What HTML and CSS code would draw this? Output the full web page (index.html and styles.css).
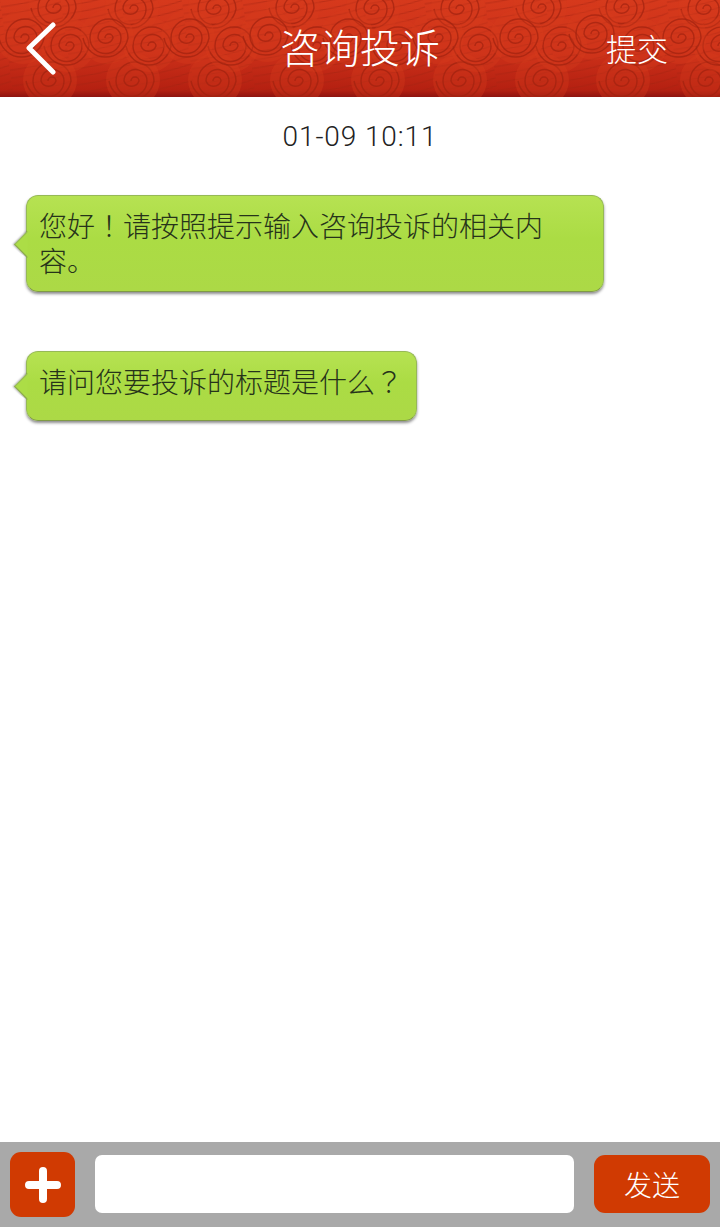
FILE: index.html
```html
<!DOCTYPE html>
<html lang="zh">
<head>
  <meta charset="UTF-8" />
  <meta name="viewport" content="width=device-width, initial-scale=1.0"/>
  <title>咨询投诉</title>
  <link rel="stylesheet" href="styles.css">
</head>
<body>
  <header class="topbar">
    <svg class="topbar-bg" width="720" height="97" viewBox="0 0 720 97">
      <defs>
        <linearGradient id="barFill" x1="0" y1="0" x2="0" y2="1">
          <stop offset="0" stop-color="#d6391c"/>
          <stop offset="0.55" stop-color="#cb3019"/>
          <stop offset="0.93" stop-color="#b42011"/>
          <stop offset="1" stop-color="#8e1410"/>
        </linearGradient>
        <pattern id="waves" width="60" height="8" patternUnits="userSpaceOnUse" patternTransform="rotate(-8)">
          <path d="M0 7 C20 7 40 6 60 2" fill="none" stroke="#a02210" stroke-opacity="0.5" stroke-width="1"/>
        </pattern>
        <g id="swirl">
          <circle r="27" fill="#d83c1d" fill-opacity="0.35"/>
          <path d="M-2 1a4 4 0 0 1 8 0a8 8 0 0 1-15 0a11.500 11.500 0 0 1 23 0a15.500 15.500 0 0 1-31 0a19 19 0 0 1 38 0a23 24 0 0 1-45 0" fill="none" stroke="#a02210" stroke-opacity="0.7" stroke-width="1.4"/>
        </g>
      </defs>
      <rect width="720" height="97" fill="url(#barFill)"/>
      <rect width="720" height="94" fill="url(#waves)"/>
      <g>
        <use href="#swirl" x="50" y="80"/><use href="#swirl" x="133" y="80"/><use href="#swirl" x="215" y="80"/><use href="#swirl" x="297" y="80"/>
        <use href="#swirl" x="378" y="80"/><use href="#swirl" x="460" y="80"/><use href="#swirl" x="542" y="80"/><use href="#swirl" x="623" y="80"/><use href="#swirl" x="707" y="80"/>
        <use href="#swirl" x="55" y="7"/><use href="#swirl" x="132" y="8"/><use href="#swirl" x="215" y="8"/><use href="#swirl" x="293" y="7"/>
        <use href="#swirl" x="373" y="8"/><use href="#swirl" x="458" y="8"/><use href="#swirl" x="540" y="7"/><use href="#swirl" x="623" y="7"/><use href="#swirl" x="705" y="8"/>
        <use href="#swirl" x="68" y="45"/><use href="#swirl" x="150" y="45"/><use href="#swirl" x="232" y="45"/><use href="#swirl" x="315" y="45"/>
        <use href="#swirl" x="396" y="45"/><use href="#swirl" x="477" y="45"/><use href="#swirl" x="560" y="45"/><use href="#swirl" x="640" y="45"/><use href="#swirl" x="720" y="45"/>
        <use href="#swirl" x="23" y="37"/><use href="#swirl" x="107" y="37"/><use href="#swirl" x="188" y="37"/><use href="#swirl" x="267" y="35"/>
        <use href="#swirl" x="347" y="37"/><use href="#swirl" x="437" y="37"/><use href="#swirl" x="517" y="37"/><use href="#swirl" x="593" y="33"/><use href="#swirl" x="680" y="37"/>
      </g>
    </svg>
    <a class="back">
      <svg width="32" height="54" viewBox="0 0 32 54"><path d="M27 3 L3 26 L27 50" fill="none" stroke="#fff" stroke-width="5" stroke-linecap="round" stroke-linejoin="round"/></svg>
    </a>
    <h1 class="title">咨询投诉</h1>
    <a class="submit">提交</a>
  </header>

  <main class="chat">
    <div class="time">01-09 10:11</div>
    <div class="bubble bubble-long">您好<span class="mark" lang="zh-TW">！</span>请按照提示输入咨询投诉的相关内容。</div>
    <div class="bubble">请问您要投诉的标题是什么<span class="mark" lang="zh-TW">？</span></div>
  </main>

  <footer class="inputbar">
    <button class="add">
      <svg width="38" height="38" viewBox="0 0 38 38"><path d="M5 19 H33 M19 5 V33" fill="none" stroke="#fff" stroke-width="8" stroke-linecap="round"/></svg>
    </button>
    <input class="msg" type="text" />
    <button class="send">发送</button>
  </footer>
</body>
</html>
```

FILE: styles.css
```css
* {
  box-sizing: border-box;
}
body {
  margin: 0;
  height: 1227px;
  background: #fff;
  font-family: "Noto Sans CJK SC", "Noto Sans", sans-serif;
  font-weight: 300;
  color: #333;
  display: flex;
  flex-direction: column;
  overflow: hidden;
}
.topbar {
  position: relative;
  height: 97px;
  display: grid;
  grid-template-columns: 1fr auto 1fr;
  align-items: center;
  color: #fff;
}
.topbar-bg {
  position: absolute;
  left: 0;
  top: 0;
}
.back, .title, .submit {
  position: relative;
}
.back {
  display: flex;
  padding-left: 26px;
}
.title {
  margin: 0;
  padding-bottom: 4px;
  font-size: 40px;
  font-weight: 300;
  line-height: 93px;
}
.submit {
  justify-self: end;
  padding-right: 52px;
  padding-bottom: 3px;
  font-size: 31px;
}
.chat {
  flex: 1;
  padding: 0 26px;
  display: flex;
  flex-direction: column;
  align-items: flex-start;
}
.time {
  align-self: center;
  margin-top: 21px;
  margin-bottom: 40px;
  height: 37px;
  line-height: 37px;
  font-family: Roboto, sans-serif;
  font-weight: 300;
  font-size: 28px;
  letter-spacing: 0.9px;
  color: #222;
}
.bubble {
  position: relative;
  min-height: 70px;
  padding: 12px 13px 13px 12px;
  margin-bottom: 59px;
  font-size: 28px;
  line-height: 35px;
  color: #26331a;
  background: linear-gradient(#b6e252, #abdc44 45%, #acd946);
  border: 1px solid #96b956;
  border-bottom-color: #7f9a45;
  border-radius: 12px;
  box-shadow: 0 2px 3px rgba(0, 0, 0, 0.45);
}
.bubble::before {
  content: "";
  position: absolute;
  left: -9px;
  top: calc(50% - 9px);
  width: 18px;
  height: 18px;
  background: #acdd46;
  border-left: 1px solid #96b956;
  border-bottom: 1px solid #8aa64e;
  transform: rotate(45deg);
  box-shadow: -1px 1px 2px rgba(0, 0, 0, 0.3);
  clip-path: polygon(0 0, 100% 100%, -30% 130%, -30% 0);
}
.mark {
  font-family: "Noto Sans CJK TC", sans-serif;
}
.bubble-long {
  width: 578px;
  padding-right: 50px;
}
.inputbar {
  height: 85px;
  background: #a9a9a9;
  display: flex;
  align-items: center;
  padding: 0 10px;
}
.add {
  width: 65px;
  height: 65px;
  padding: 0;
  border: none;
  border-radius: 11px;
  background: #d03a02;
  display: flex;
  align-items: center;
  justify-content: center;
}
.msg {
  width: 479px;
  height: 58px;
  margin: -2px 20px 0;
  border: none;
  border-radius: 7px;
  background: #fff;
}
.send {
  width: 116px;
  height: 58px;
  margin-top: -2px;
  padding: 0;
  border: none;
  border-radius: 11px;
  background: #d03a02;
  color: #fff;
  font-family: inherit;
  font-weight: 300;
  font-size: 28px;
}
```
